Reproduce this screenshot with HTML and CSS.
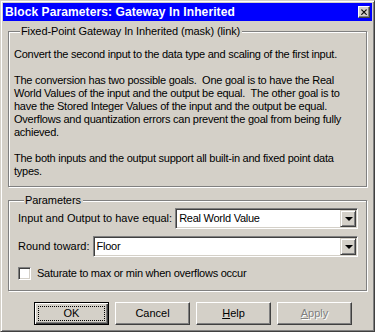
FILE: index.html
```html
<html>
  <head>
    <link rel="stylesheet" href="styles.css">
  </head>
  <body class="body">
    <div class="Window">
      <div class="TitleBar">
        <span class="TitleBar-text">Block Parameters: Gateway In Inherited</span>
        <button class="TitleBar-close">
          <svg width="8" height="7" viewBox="0 0 8 7">
            <path d="M0 0h2v1h-2zM6 0h2v1h-2zM1 1h2v1h-2zM5 1h2v1h-2zM2 2h4v1h-4zM3 3h2v1h-2zM2 4h4v1h-4zM1 5h2v1h-2zM5 5h2v1h-2zM0 6h2v1h-2zM6 6h2v1h-2z" fill="#000"/>
          </svg>
        </button>
      </div>

      <div class="Content">
        <fieldset class="Group Group--desc">
          <legend class="Group-label">Fixed-Point Gateway In Inherited (mask) (link)</legend>
          <p>Convert the second input to the data type and scaling of the first input.</p>
          <p>The conversion has two possible goals.&nbsp; One goal is to have the Real<br>
            World Values of the input and the output be equal.&nbsp; The other goal is to<br>
            have the Stored Integer Values of the input and the output be equal.<br>
            Overflows and quantization errors can prevent the goal from being fully<br>
            achieved.</p>
          <p>The both inputs and the output support all built-in and fixed point data<br>
            types.</p>
        </fieldset>

        <fieldset class="Group Group--params">
          <legend class="Group-label">Parameters</legend>
          <div class="Field">
            <span class="Field-label">Input and Output to have equal:</span>
            <div class="Combo">
              <span class="Combo-value">Real World Value</span>
              <span class="Combo-btn"><span class="Combo-arrow"></span></span>
            </div>
          </div>
          <div class="Field">
            <span class="Field-label">Round toward:</span>
            <div class="Combo">
              <span class="Combo-value">Floor</span>
              <span class="Combo-btn"><span class="Combo-arrow"></span></span>
            </div>
          </div>
          <div class="Check">
            <span class="Check-box"></span>
            <span>Saturate to max or min when overflows occur</span>
          </div>
        </fieldset>

        <div class="Buttons">
          <button class="Btn Btn--default"><span class="Btn-focus">OK</span></button>
          <button class="Btn">Cancel</button>
          <button class="Btn"><u>H</u>elp</button>
          <button class="Btn" disabled><u>A</u>pply</button>
        </div>
      </div>
    </div>
  </body>
</html>
```

FILE: styles.css
```css
html, body {
  padding: 0;
  margin: 0;
  font-family: "Liberation Sans", Arial, sans-serif;
  font-size: 11px;
  line-height: 13px;
  letter-spacing: -0.25px;
  color: #000;
}

.Window {
  box-sizing: border-box;
  width: 375px;
  height: 332px;
  padding: 2px;
  background: #d4d0c8;
  border: 1px solid;
  border-color: #d4d0c8 #404040 #404040 #d4d0c8;
  box-shadow: inset 1px 1px 0 #fff, inset -1px -1px 0 #808080;
}

.TitleBar {
  display: flex;
  align-items: center;
  justify-content: space-between;
  height: 18px;
  padding: 0 2px;
  background: #0000ff;
}
.TitleBar-text {
  color: #fff;
  font-weight: bold;
  font-size: 12px;
  letter-spacing: 0.1px;
}
.TitleBar-close {
  display: flex;
  align-items: center;
  justify-content: center;
  width: 12px;
  height: 12px;
  padding: 0;
  background: #d4d0c8;
  border: 1px solid;
  border-color: #fff #404040 #404040 #fff;
  box-shadow: inset -1px -1px 0 #808080;
}
.TitleBar-close svg {
  width: 6px;
  height: 6px;
}

.Content {
  padding: 0 5px;
}

.Group {
  margin: 4px 0 0;
  padding: 0 5px 8px;
  border: 1px solid #808080;
  box-shadow: inset 1px 1px 0 #fff, 1px 1px 0 #fff;
}
.Group-label {
  padding: 0 2px 0 1px;
  margin-left: 6px;
  background: #d4d0c8;
  letter-spacing: -0.1px;
}
.Group p {
  margin: 0 0 13px;
  white-space: nowrap;
}
.Group p:first-of-type {
  margin-top: 10px;
}
.Group p:last-child {
  margin-bottom: 0;
}

.Group--params {
  margin-top: 7px;
  padding: 1px 8px 10px 9px;
}

.Field {
  display: flex;
  align-items: center;
  gap: 3px;
  margin-bottom: 7px;
}
.Field-label {
  letter-spacing: 0;
}
.Combo {
  flex: 1;
  display: flex;
  align-items: center;
  box-sizing: border-box;
  height: 21px;
  padding: 0 0 0 2px;
  background: #fff;
  border: 1px solid;
  border-color: #808080 #fff #fff #808080;
  box-shadow: inset 1px 1px 0 #404040, inset -1px -1px 0 #d4d0c8;
}
.Combo-value {
  flex: 1;
  padding-left: 1px;
}
.Combo-btn {
  display: flex;
  align-items: center;
  justify-content: center;
  box-sizing: border-box;
  width: 16px;
  height: 17px;
  margin-right: 1px;
  background: #d4d0c8;
  border: 1px solid;
  border-color: #d4d0c8 #404040 #404040 #d4d0c8;
  box-shadow: inset 1px 1px 0 #fff, inset -1px -1px 0 #808080;
}
.Combo-arrow {
  width: 0;
  height: 0;
  border-left: 4px solid transparent;
  border-right: 4px solid transparent;
  border-top: 4px solid #000;
  margin-left: 1px;
}

.Check {
  display: flex;
  align-items: center;
  gap: 6px;
  margin-top: 10px;
}
.Check-box {
  box-sizing: border-box;
  width: 13px;
  height: 13px;
  background: #fff;
  border: 1px solid;
  border-color: #808080 #fff #fff #808080;
  box-shadow: inset 1px 1px 0 #404040, inset -1px -1px 0 #d4d0c8;
}

.Buttons {
  display: flex;
  gap: 6px;
  margin-top: 11px;
  padding-left: 26px;
}
.Btn {
  box-sizing: border-box;
  width: 75px;
  height: 23px;
  padding: 0;
  font: inherit;
  color: #000;
  background: #d4d0c8;
  border: 1px solid;
  border-color: #fff #404040 #404040 #fff;
  box-shadow: inset -1px -1px 0 #808080;
}
.Btn--default {
  border: 1px solid #000;
  box-shadow: inset 1px 1px 0 #fff, inset -1px -1px 0 #404040, inset -2px -2px 0 #808080;
  padding: 3px;
}
.Btn-focus {
  display: flex;
  align-items: center;
  justify-content: center;
  height: 100%;
  border: 1px dotted #000;
  box-sizing: border-box;
}
.Btn:disabled {
  color: #808080;
  text-shadow: 1px 1px 0 #fff;
}
```
